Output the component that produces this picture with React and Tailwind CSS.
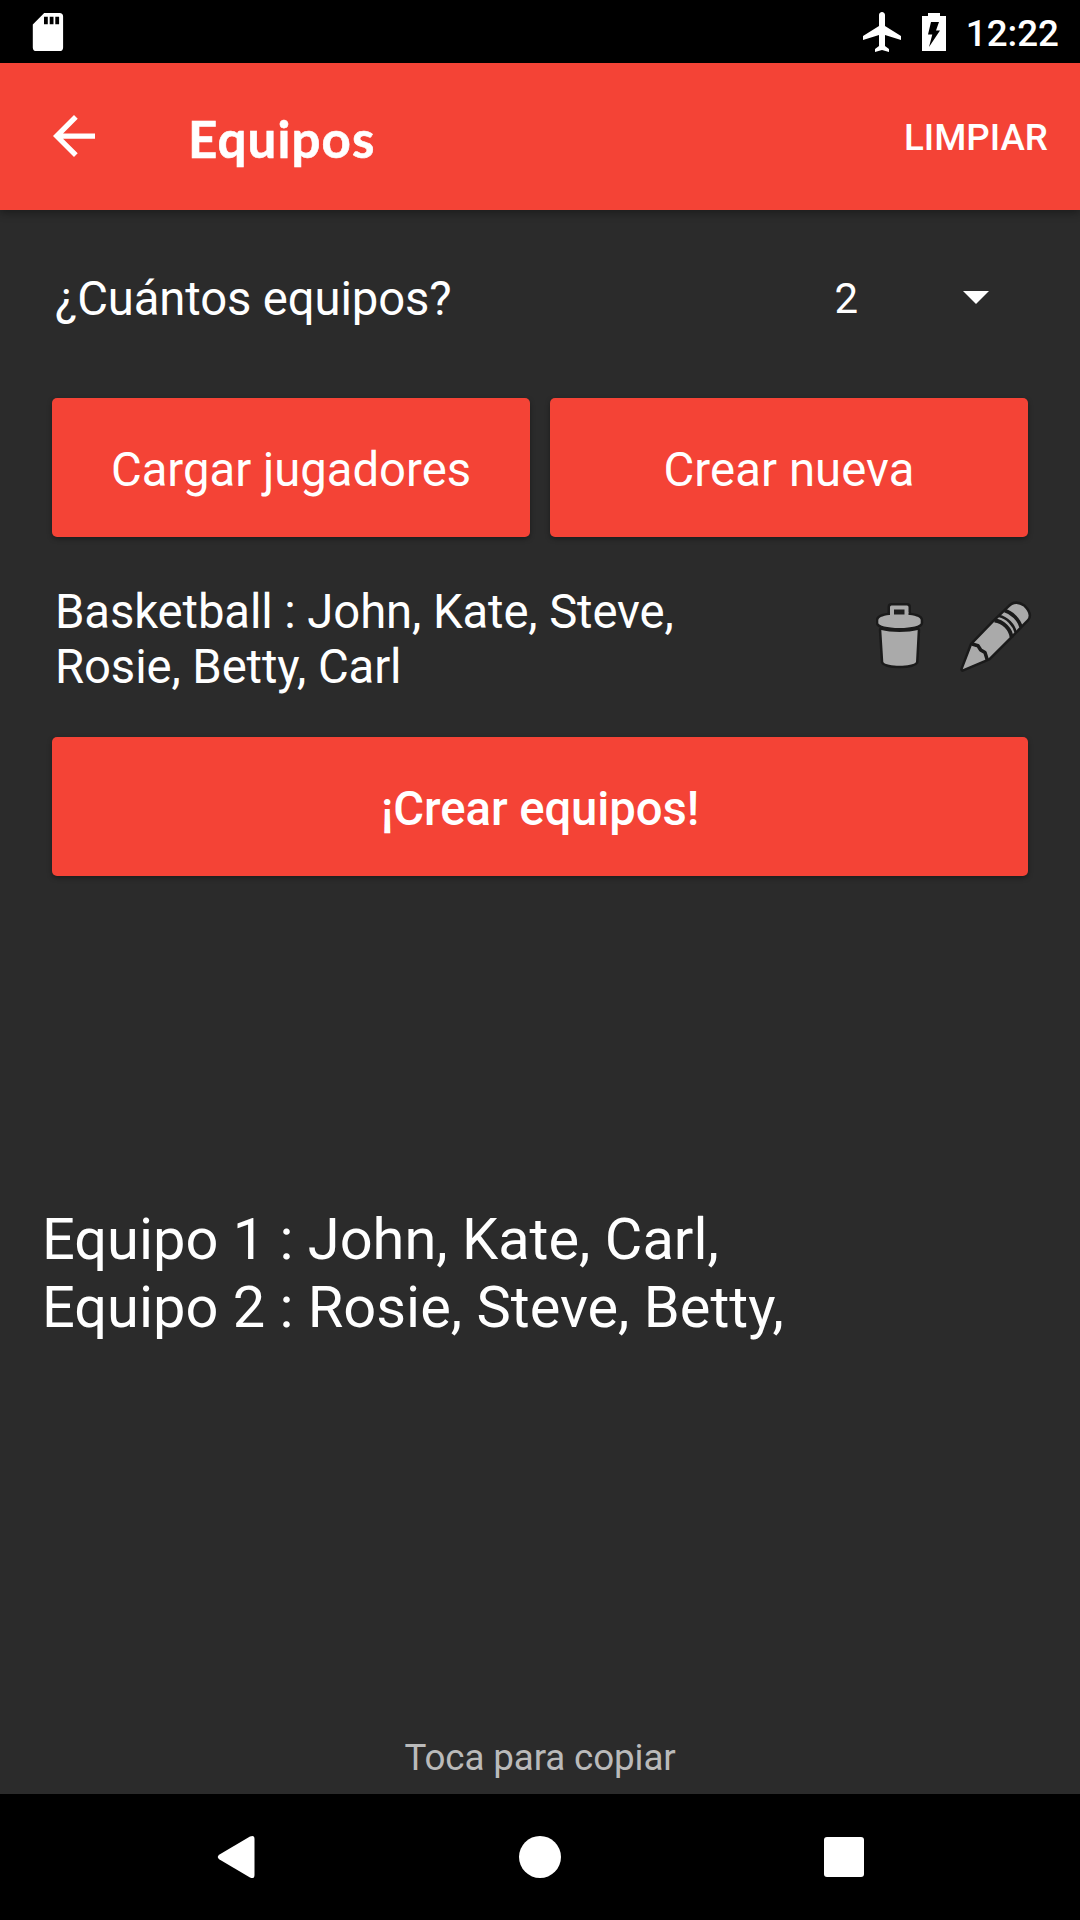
import { useState } from 'react';

const SdCardIcon = () => (
  <svg width="32" height="40" viewBox="0 0 32 40" fill="#fff">
    <path
      fillRule="evenodd"
      d="M12.2 1H27.5a3.6 3.6 0 0 1 3.6 3.6V35.4a3.6 3.6 0 0 1-3.6 3.6H4.4A3.6 3.6 0 0 1 .8 35.4V12.4ZM12 4.7V12.3h3.8V4.7ZM17.7 4.7V12.3h3.8V4.7ZM23.3 4.7V12.3h3.8V4.7Z"
    />
  </svg>
);

const AirplaneIcon = () => (
  <svg width="38" height="40" viewBox="2 2 19 20" preserveAspectRatio="none" fill="#fff">
    <path d="M21 16v-2l-8-5V3.500c0-.83-.67-1.500-1.500-1.500S10 2.670 10 3.500V9l-8 5v2l8-2.500V19l-2 1.500V22l3.500-1 3.500 1v-1.500L13 19v-5.500l8 2.500z" />
  </svg>
);

const BatteryIcon = () => (
  <svg width="24" height="38" viewBox="0 0 24 38">
    <path d="M6 0H18V3H24V38H0V3H6Z" fill="#fff" />
    <path d="M9 9H17L14 17.500H18L7 34L10.300 21.500H6Z" fill="#000" />
  </svg>
);

const BackIcon = () => (
  <svg width="42" height="42" viewBox="4 4 16 16" fill="#fff">
    <path d="M20 11H7.830l5.590-5.590L12 4l-8 8 8 8 1.410-1.410L7.830 13H20v-2z" />
  </svg>
);

const TrashIcon = () => (
  <svg width="48" height="68" viewBox="0 0 48 68" fill="#aaa" stroke="#1a1a1a" strokeWidth="5" strokeLinejoin="round">
    <g className="[paint-order:stroke]">
      <path d="M5.300 28C14 30.500 33 30.500 41.700 28L40 60C37 65 10 65 7.300 60Z" />
      <path d="M14 16V5Q14 3.500 15.500 3.500H31Q32.500 3.500 32.500 5V16Z" />
      <path d="M2.300 18C2.300 15 9 13 16 13H31C38 13 44.700 15 44.700 18V21C44.700 23.500 36 26 23.500 26S2.300 23.500 2.300 21Z" />
      <path d="M14 10H32.500V16H14Z" stroke="none" />
    </g>
    <path d="M18 7.500H28.500V12.500H18Z" fill="#1f1f1f" stroke="none" />
  </svg>
);

const PencilIcon = () => (
  <svg width="72" height="72" viewBox="0 0 72 72" fill="#aaa" stroke="#1a1a1a" strokeWidth="5" strokeLinejoin="round">
    <path
      className="[paint-order:stroke]"
      d="M2.700 69.300L12 45L14.700 42L34 22L48.300 8.300Q55 .5 63.500 6.500Q71.500 14.500 67 19.500L62.300 24.300L50 37L28.700 58.300Z"
    />
    <path d="M12 44L18 45.700L20.700 50L25 52.500L27.300 60" fill="none" strokeWidth="3.500" />
    <path d="M34.500 20.500C43 21 51 29.500 51.500 37.500" fill="none" strokeWidth="3.800" />
    <path d="M39 16C47 17.500 54 25 55.700 32.500" fill="none" strokeWidth="2.500" />
    <path d="M44.500 10.500C52 12.500 59 19.500 61 27" fill="none" strokeWidth="3.500" />
  </svg>
);

const ActionButton = ({ children, onClick, className = '' }) => (
  <button
    type="button"
    onClick={onClick}
    className={`h-[139px] rounded-[5px] bg-[#f44336] pt-[5px] text-[47.25px] leading-[56px] shadow-[0_2px_5px_rgba(0,0,0,0.35)] ${className}`}
  >
    {children}
  </button>
);

const initialTeams = [
  { id: 1, players: ['John', 'Kate', 'Carl'] },
  { id: 2, players: ['Rosie', 'Steve', 'Betty'] }
];

const group = {
  name: 'Basketball',
  players: ['John', 'Kate', 'Steve', 'Rosie', 'Betty', 'Carl']
};

const App = () => {
  const [teams, setTeams] = useState(initialTeams);

  return (
    <div className="flex h-[1920px] w-[1080px] flex-col overflow-hidden bg-[#2b2b2b] font-[Roboto,sans-serif] text-white">
      <div className="flex h-[63px] shrink-0 items-center justify-between bg-black pr-[21px] pl-8">
        <SdCardIcon />
        <div className="flex items-center">
          <AirplaneIcon />
          <div className="ml-[21px]">
            <BatteryIcon />
          </div>
          <span className="ml-5 pt-[3px] text-[36.75px] leading-[43px] font-medium">12:22</span>
        </div>
      </div>

      <header className="z-10 flex h-[147px] shrink-0 items-center bg-[#f44336] pr-8 pl-[53px] shadow-[0_3px_8px_rgba(0,0,0,0.35)]">
        <button type="button" className="pb-px">
          <BackIcon />
        </button>
        <h1 className="ml-[93px] pt-[4px] font-[Lato,sans-serif] text-[51px] leading-[60px] font-bold tracking-[1.1px] [-webkit-text-stroke:0.6px_#fff]">
          Equipos
        </h1>
        <button type="button" className="ml-auto pt-[2px] text-[36.75px] font-medium" onClick={() => setTeams([])}>
          LIMPIAR
        </button>
      </header>

      <main className="flex flex-1 flex-col px-[52px]">
        <div className="flex h-[188px] items-center pr-[39px] pb-[10px] pl-[3px]">
          <span className="pt-px text-[47.25px] tracking-[-0.13px]">¿Cuántos equipos?</span>
          <button type="button" className="ml-auto flex items-center gap-[105px] pb-[2px]">
            <span className="text-[42px]">2</span>
            <svg className="mb-[2px]" width="26" height="13" viewBox="0 0 26 13" fill="#fff">
              <path d="M0 0H26L13 13Z" />
            </svg>
          </button>
        </div>

        <div className="grid grid-cols-2 gap-5">
          <ActionButton>Cargar jugadores</ActionButton>
          <ActionButton className="tracking-[0.1px]">Crear nueva</ActionButton>
        </div>

        <div className="-mr-1 flex h-[200px] items-center justify-between pl-[3px]">
          <p className="w-[680px] pt-[5px] text-[47.25px] leading-[55px] tracking-[-0.1px]">
            {`${group.name} : ${group.players.join(', ')}`}
          </p>
          <div className="flex items-center gap-9 pb-[2px]">
            <button type="button">
              <TrashIcon />
            </button>
            <button type="button">
              <PencilIcon />
            </button>
          </div>
        </div>

        <ActionButton className="font-medium tracking-[-0.08px]">¡Crear equipos!</ActionButton>

        <div className="-ml-[10px] flex flex-1 flex-col justify-center pb-[66px] text-[57.75px] leading-[68px]">
          {teams.map((team) => (
            <p key={team.id}>{`Equipo ${team.id} : ${team.players.join(', ')},`}</p>
          ))}
        </div>

        <p className="pb-[15px] text-center text-[36.75px] leading-[43px] tracking-[-0.12px] text-[#bababa]">
          Toca para copiar
        </p>
      </main>

      <nav className="flex h-[126px] shrink-0 items-center justify-between bg-black pr-[216px] pl-[217px]">
        <svg width="38" height="44" viewBox="0 0 38 44" fill="#fff">
          <path d="M33 1.500Q37.500-.500 37.500 4V40Q37.500 44.500 33 42.500L2.500 24.500Q-1 22 2.500 19.500Z" />
        </svg>
        <span className="size-[42px] rounded-full bg-white" />
        <span className="size-10 rounded-[3px] bg-white" />
      </nav>
    </div>
  );
};

export default App;
